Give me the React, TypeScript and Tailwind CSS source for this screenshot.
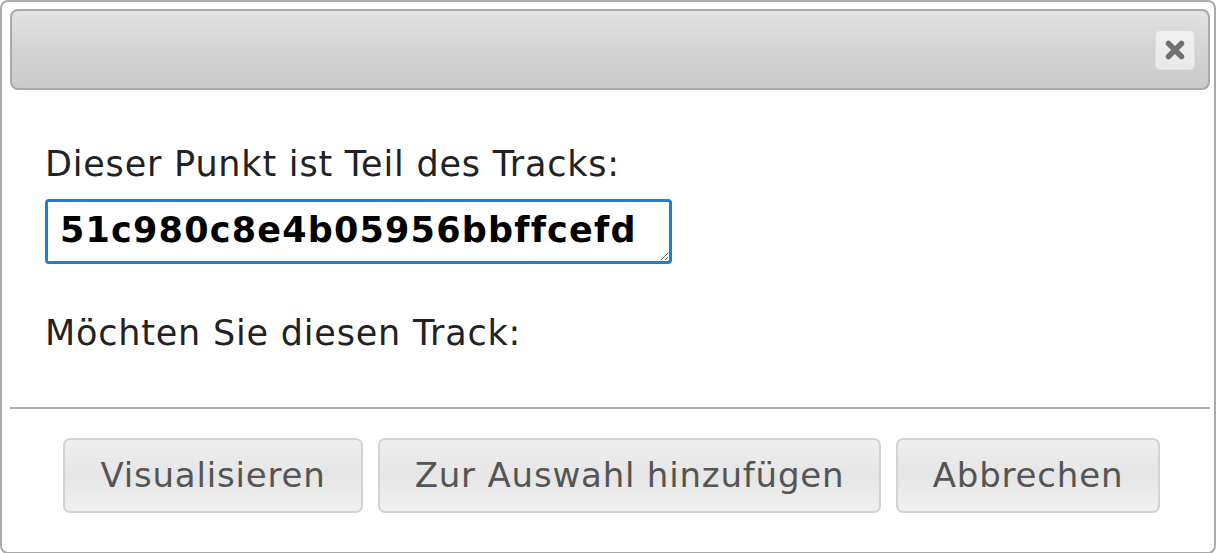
import React from "react";

export default function App() {
  const font = { fontFamily: '"DejaVu Sans", Verdana, sans-serif' };
  const btn =
    "h-[75px] border-2 border-[#d3d3d3] rounded-[7px] bg-gradient-to-b from-[#eeeeee] via-[#e6e6e6] to-[#f0f0f0] text-[#555555] text-[34px] tracking-[0.8px] flex items-center justify-center";
  return (
    <div className="w-[1218px] h-[553px] bg-white overflow-hidden" style={font}>
      <div className="w-[1216px] h-[554px] border-2 border-[#aaaaaa] rounded-[8px] bg-white flex flex-col pl-[8px] pr-[4px] pt-[7px]">
        {/* title bar */}
        <div className="h-[81px] border-2 border-[#a9a9a9] rounded-[8px] bg-gradient-to-b from-[#e3e3e3] via-[#d3d3d3] to-[#cbcbcb] flex items-center justify-end pr-[13px]">
          <div className="w-[40px] h-[40px] rounded-[5px] border border-[#dedede] bg-gradient-to-b from-[#f0f0f0] to-[#e9e9e9] flex items-center justify-center">
            <svg width="20" height="20" viewBox="0 0 20 20">
              <path d="M3.5 3.5 L16.5 16.5 M16.5 3.5 L3.5 16.5" stroke="#707070" strokeWidth="5.5" strokeLinecap="round" />
            </svg>
          </div>
        </div>
        {/* content */}
        <div className="flex flex-col pl-[35px] pt-[54px] text-[35px] leading-[40px] tracking-[0.8px] text-[#222222]">
          <div>Dieser Punkt ist Teil des Tracks:</div>
          <textarea
            readOnly
            rows={1}
            value="51c980c8e4b05956bbffcefd"
            className="mt-[15px] w-[627px] h-[65px] border-[3px] border-[#1f7fc8] rounded-[4px] pl-[12px] pt-[8px] text-[35px] leading-[40px] tracking-[1.2px] font-bold text-black overflow-hidden outline-none"
            style={font}
          />
          <div className="mt-[49px]">Möchten Sie diesen Track:</div>
        </div>
        {/* separator */}
        <div className="mt-[54px] h-[2px] bg-[#aaaaaa]" />
        {/* buttons */}
        <div className="flex justify-end gap-[15px] pt-[29px] pr-[50px]">
          <button className={btn + " w-[300px]"} style={font}>Visualisieren</button>
          <button className={btn + " w-[503px]"} style={font}>Zur Auswahl hinzufügen</button>
          <button className={btn + " w-[264px]"} style={font}>Abbrechen</button>
        </div>
      </div>
    </div>
  );
}
